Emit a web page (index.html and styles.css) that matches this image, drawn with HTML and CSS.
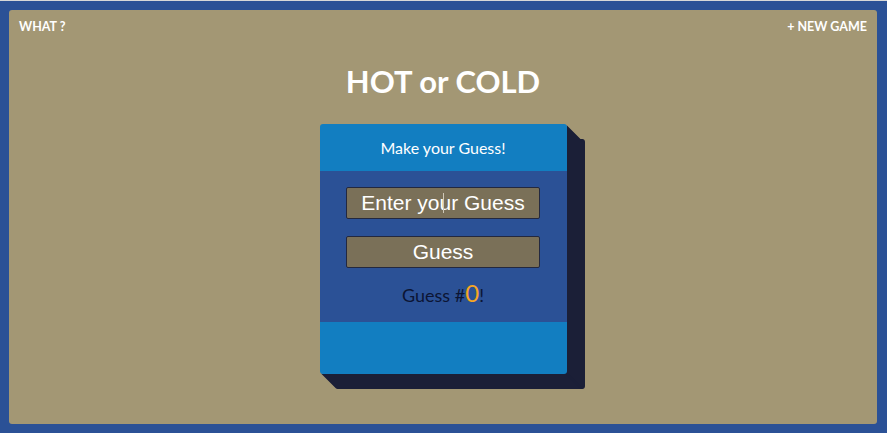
FILE: index.html
```html
<!DOCTYPE html>
<html lang="en">
<head>
<meta charset="utf-8">
<title>Hot or Cold</title>
<link rel="stylesheet" href="styles.css">
</head>
<body>
<div class="frame">
  <nav class="nav">
    <a class="nav-link" href="#">WHAT ?</a>
    <a class="nav-link" href="#">+ NEW GAME</a>
  </nav>
  <h1 class="title">HOT or COLD</h1>
  <section class="card">
    <header class="card-head">Make your Guess!</header>
    <div class="card-body">
      <div class="field">
        <input class="guess-input" type="text" placeholder="Enter your Guess">
        <span class="caret"></span>
      </div>
      <button class="guess-btn" type="button">Guess</button>
      <p class="count">Guess #<span class="count-num">0</span>!</p>
    </div>
    <footer class="card-foot"></footer>
  </section>
</div>
</body>
</html>
```
FILE: styles.css
```css
* { box-sizing: border-box; }
html, body { height: 100%; }
body {
  margin: 0;
  padding: 9px 10px 9px 9px;
  background: #2b5196;
  border-top: 1px solid #d8d8d8;
  font-family: Lato, "Open Sans", sans-serif;
}
.frame {
  height: 100%;
  background: #a39774;
  border-radius: 3px;
  display: flex;
  flex-direction: column;
  align-items: center;
}
.nav {
  align-self: stretch;
  display: flex;
  justify-content: space-between;
  padding: 9px 10px 0 10px;
}
.nav-link {
  color: #fff;
  text-decoration: none;
  font-weight: 700;
  font-size: 12.5px;
  line-height: 15px;
}
.title {
  margin: 29px 0 0 0;
  color: #fff;
  font-weight: 700;
  font-size: 31px;
  line-height: 37px;
}
.card {
  margin-top: 24px;
  width: 247px;
  border-radius: 3px;
  box-shadow:
    1px 1px 0 #1b1f37, 2px 2px 0 #1b1f37, 3px 3px 0 #1b1f37, 4px 4px 0 #1b1f37,
    5px 5px 0 #1b1f37, 6px 6px 0 #1b1f37, 7px 7px 0 #1b1f37, 8px 8px 0 #1b1f37,
    9px 9px 0 #1b1f37, 10px 10px 0 #1b1f37, 11px 11px 0 #1b1f37, 12px 12px 0 #1b1f37,
    13px 13px 0 #1b1f37, 14px 14px 0 #1b1f37, 15px 15px 0 #1b1f37, 16px 15px 0 #1b1f37,
    17px 15px 0 #1b1f37, 18px 15px 0 #1b1f37;
}
.card-head {
  height: 47px;
  background: #127ec1;
  color: #fff;
  font-size: 16px;
  display: flex;
  align-items: center;
  justify-content: center;
  border-radius: 3px 3px 0 0;
}
.card-body {
  background: #2b5196;
  height: 151px;
  padding-top: 16px;
  display: flex;
  flex-direction: column;
  align-items: center;
}
.field {
  position: relative;
  width: 194px;
  height: 32px;
}
.guess-input,
.guess-btn {
  width: 194px;
  height: 32px;
  background: #7a7058;
  border: 1px solid #23283f;
  border-radius: 2px;
  color: #fff;
  font-family: "Liberation Sans", Arial, sans-serif;
  font-size: 21px;
  text-align: center;
  padding: 0;
  outline: none;
}
.guess-input::placeholder { color: #fff; opacity: 1; }
.caret {
  position: absolute;
  left: 97px;
  top: 6px;
  width: 1px;
  height: 20px;
  background: #cfc8b8;
}
.guess-btn {
  margin-top: 17px;
  cursor: pointer;
}
.count {
  margin: 11px 0 0 0;
  color: #0c1534;
  font-size: 18px;
  line-height: 28px;
}
.count-num {
  color: #f6a623;
  font-size: 24px;
}
.card-foot {
  height: 52px;
  background: #127ec1;
  border-radius: 0 0 3px 3px;
}
```
